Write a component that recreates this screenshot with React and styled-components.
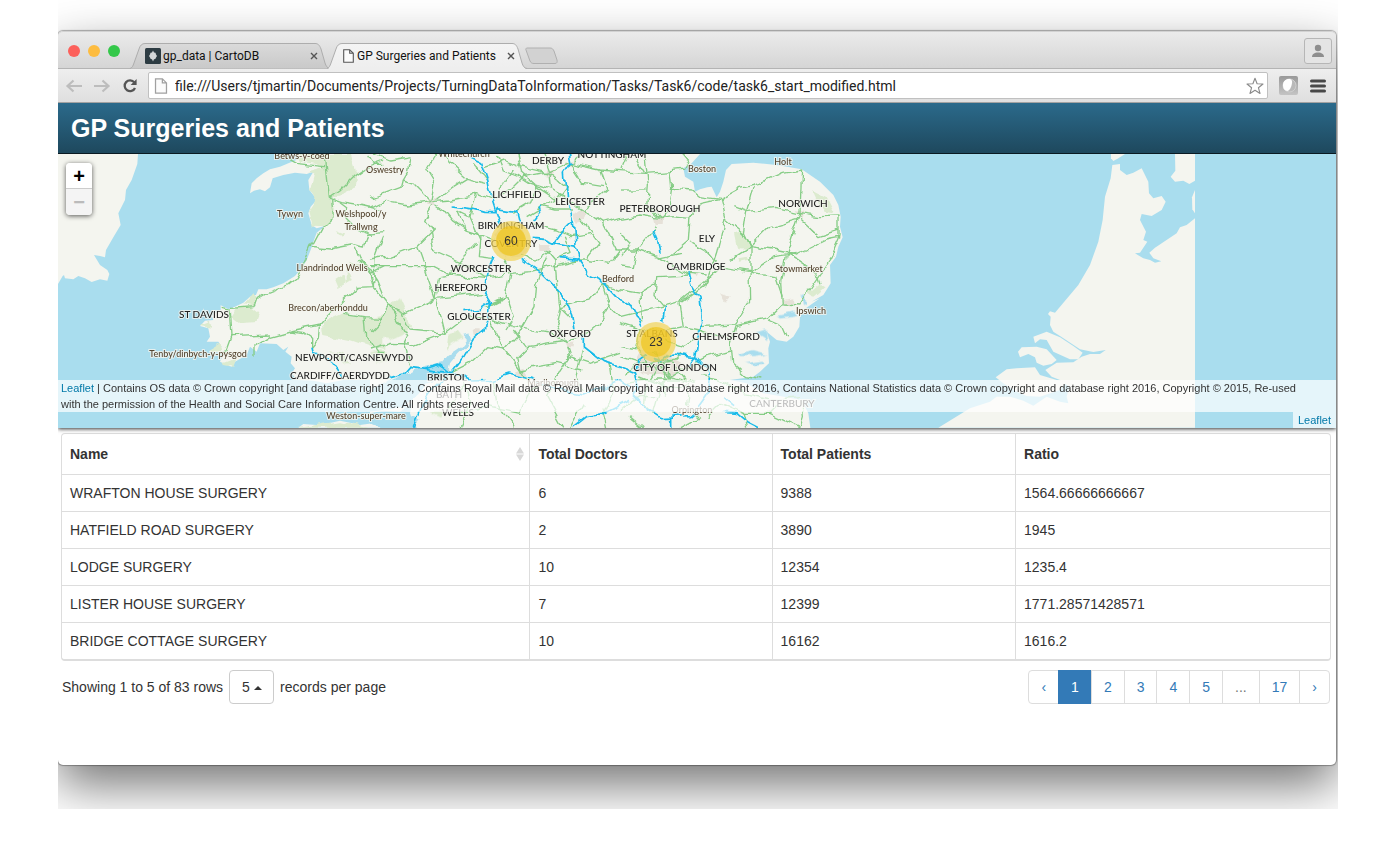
import React, { useState } from "react";
import styled, { createGlobalStyle } from "styled-components";

const GlobalStyle = createGlobalStyle`
  *, *::before, *::after { box-sizing: border-box; }
  body {
    margin: 0;
    background: #fff;
    color: #333;
    font: 14px/20px "Liberation Sans", Arial, sans-serif;
  }
  button, input, select { font: inherit; color: inherit; margin: 0; }
`;

const UI_FONT = `Roboto, "Liberation Sans", sans-serif`;

/* ---------- window frame ---------- */

const Stage = styled.div`
  margin: 0 54px 0 58px;
  padding: 31px 2px 44px 0;
  overflow: hidden;
`;

const Window = styled.div`
  background: #fff;
  border-radius: 5px;
  box-shadow: 0 0 1px 1px rgba(0, 0, 0, 0.3), 0 20px 50px rgba(0, 0, 0, 0.55);
`;

const TabStrip = styled.div`
  display: flex;
  align-items: flex-end;
  height: 38px;
  padding: 2px 4px 0 10px;
  border-top: 1px solid #d2d2d2;
  border-bottom: 1px solid #b4b4b4;
  border-radius: 5px 5px 0 0;
  background: linear-gradient(#ebebeb, #d5d5d5);
`;

const Lights = styled.div`
  display: flex;
  gap: 8px;
  align-self: center;
  margin-right: 10px;
`;

const Light = styled.span`
  width: 12px;
  height: 12px;
  border-radius: 50%;
  background: ${(p) => p.$color};
`;

const Tab = styled.div`
  position: relative;
  z-index: ${(p) => (p.$active ? 2 : 1)};
  display: flex;
  align-items: center;
  width: 200px;
  height: 26px;
  margin: 0 -3px -1px 0;
  padding: 0 10px 0 15px;
`;

const TabShape = styled.svg`
  position: absolute;
  inset: 0;
  z-index: -1;
`;

const TabButton = styled.button`
  flex: 1;
  display: flex;
  align-items: center;
  gap: 2px;
  padding: 0;
  border: 0;
  background: none;
  font: 12px/16px ${UI_FONT};
  color: #111;
  white-space: nowrap;
`;

const IconButton = styled.button`
  display: flex;
  align-items: center;
  justify-content: center;
  flex: none;
  width: ${(p) => p.$size || 20}px;
  height: ${(p) => p.$size || 20}px;
  padding: 0;
  border: 0;
  background: none;
`;

const NewTab = styled.button`
  align-self: flex-end;
  margin: 0 0 3px 0;
  padding: 0;
  border: 0;
  background: none;
  height: 18px;
`;

const UserButton = styled.button`
  display: flex;
  align-items: center;
  justify-content: center;
  align-self: center;
  margin-left: auto;
  width: 28px;
  height: 26px;
  padding: 0;
  border: 1px solid #b6b6b6;
  border-radius: 3px;
  background: #e4e4e4;
`;

const Toolbar = styled.div`
  display: flex;
  align-items: center;
  gap: 8px;
  height: 34px;
  padding: 0 8px 0 6px;
  border-bottom: 1px solid #a2a2a2;
  background: linear-gradient(#eeeeee, #dfdfdf);
`;

const Omnibox = styled.label`
  flex: 1;
  display: flex;
  align-items: center;
  gap: 7px;
  height: 27px;
  padding: 0 3px 0 5px;
  border: 1px solid #c0c0c0;
  border-radius: 2px;
  background: #fff;
`;

const Url = styled.input`
  flex: 1;
  min-width: 0;
  padding: 0;
  border: 0;
  outline: 0;
  background: none;
  font: 14px/20px ${UI_FONT};
  color: #222;
`;

/* ---------- page ---------- */

const Banner = styled.header`
  display: flex;
  align-items: center;
  height: 51px;
  padding: 0 13px;
  border-bottom: 1px solid #0a1a22;
  background: linear-gradient(#2b6a8b, #1e485d);
`;

const Title = styled.h1`
  margin: 0;
  font-size: 25px;
  line-height: 30px;
  font-weight: bold;
  color: #fff;
`;

const MapPane = styled.section`
  position: relative;
  height: 274px;
  overflow: hidden;
  background: #a9ddee;
`;

const MapShadow = styled.div`
  position: relative;
  box-shadow: 0 1px 4px rgba(0, 0, 0, 0.8);
  clip-path: inset(0 0 -8px 0);
`;

const MapDrawing = styled.svg`
  display: block;
`;

const City = styled.text`
  font: 500 ${(p) => (p.$town ? 9 : 10)}px Lato, sans-serif;
  fill: ${(p) => (p.$town ? "#54442f" : "#222")};
  stroke: rgba(244, 245, 239, 0.8);
  stroke-width: 2px;
  paint-order: stroke;
  text-anchor: middle;
`;

const Cluster = styled.button`
  position: absolute;
  left: ${(p) => p.$x}px;
  top: ${(p) => p.$y}px;
  width: 40px;
  height: 40px;
  padding: 5px;
  border: 0;
  border-radius: 50%;
  background: rgba(241, 211, 87, 0.7);
`;

const ClusterCore = styled.span`
  display: block;
  border-radius: 50%;
  background: rgba(240, 194, 12, 0.6);
  font-size: 12px;
  line-height: 30px;
`;

const ZoomControl = styled.div`
  position: absolute;
  left: 8px;
  top: 9px;
  border-radius: 4px;
  overflow: hidden;
  box-shadow: 0 1px 5px rgba(0, 0, 0, 0.65);
`;

const ZoomButton = styled.button`
  display: block;
  width: 26px;
  height: 26px;
  padding: 0;
  border: 0;
  border-bottom: ${(p) => (p.disabled ? "0" : "1px solid #ccc")};
  background: ${(p) => (p.disabled ? "#f4f4f4" : "#fff")};
  color: ${(p) => (p.disabled ? "#bbb" : "#000")};
  font: bold 20px/26px "Liberation Sans", sans-serif;
`;

const Credits = styled.div`
  position: absolute;
  inset: auto 0 0 0;
  display: flex;
  flex-direction: column;
  align-items: flex-end;
  font-size: 11px;
  line-height: 16px;
`;

const Credit = styled.div`
  padding: ${(p) => (p.$small ? "0 5px" : "0 20px 0 3px")};
  background: rgba(255, 255, 255, 0.7);
  a { color: #0078a8; text-decoration: none; }
`;

const TableArea = styled.main`
  padding: 5px 5px 61px 3px;
`;

const TableFrame = styled.div`
  border: 1px solid #ddd;
  border-bottom-width: 2px;
  border-radius: 4px;
  overflow: hidden;
`;

const Table = styled.table`
  width: 100%;
  table-layout: fixed;
  border-collapse: collapse;
`;

const HeadCell = styled.th`
  height: 40px;
  padding: 0 8px;
  border-bottom: 1px solid #ddd;
  text-align: left;
  font-weight: bold;
  & + & { border-left: 1px solid #ddd; }
`;

const HeadInner = styled.div`
  display: flex;
  align-items: center;
  justify-content: space-between;
  margin-right: -3px;
`;

const Cell = styled.td`
  height: 37px;
  padding: 8px;
  & + & { border-left: 1px solid #ddd; }
  tr + tr > & { border-top: 1px solid #ddd; }
`;

const TableFooter = styled.div`
  display: flex;
  justify-content: space-between;
  align-items: center;
  padding: 9px 1px 0;
`;

const Summary = styled.div`
  display: flex;
  align-items: center;
  gap: 6px;
`;

const PageSize = styled.span`
  position: relative;
  svg { position: absolute; right: 12px; top: 16px; pointer-events: none; }
`;

const SizeSelect = styled.select`
  appearance: none;
  display: block;
  width: 45px;
  height: 34px;
  padding: 0 12px;
  border: 1px solid #ccc;
  border-radius: 4px;
  background: #fff;
`;

const Pager = styled.nav`
  display: flex;
`;

const PageLink = styled.a`
  padding: 6px 12px;
  margin-left: -1px;
  border: 1px solid ${(p) => (p.$current ? "#337ab7" : "#ddd")};
  background: ${(p) => (p.$current ? "#337ab7" : "#fff")};
  color: ${(p) => (p.$current ? "#fff" : p.$muted ? "#777" : "#337ab7")};
  text-decoration: none;
  &:first-child { border-radius: 4px 0 0 4px; }
  &:last-child { border-radius: 0 4px 4px 0; }
`;

/* ---------- icons ---------- */

const CloseIcon = () => (
  <svg width="8" height="8" viewBox="0 0 8 8">
    <path d="M1 1 7 7M7 1 1 7" stroke="#555" strokeWidth="1.4" />
  </svg>
);

const PageIcon = ({ color = "#555", w = 13, h = 14 }) => (
  <svg width={w} height={h} viewBox="0 0 11 14">
    <path d="M.7.7h6l3.6 3.6v9H.7zM6.7.7v3.6h3.6" fill="#fbfbfb" stroke={color} strokeWidth="1.1" />
  </svg>
);

const CartoIcon = () => (
  <svg width="16" height="16" viewBox="0 0 16 16">
    <rect width="16" height="16" rx="1.5" fill="#2d3c43" />
    <path d="M8 2.500 9 4.500 10.500 4.800 11 6.500 12 8 11 9.500 10.300 11 9 11.200 8 13.600 7 11.200 5.700 11 5 9.500 4 8 5 6.500 5.500 4.800 7 4.500z" fill="#d4d8da" />
  </svg>
);

const ArrowIcon = ({ flip }) => (
  <svg width="18" height="14" viewBox="0 0 18 14">
    <path
      d={flip ? "M1 7h14M9.500 1.500 15.500 7 9.500 12.500" : "M17 7H3M8.500 1.500 2.500 7 8.500 12.500"}
      fill="none" stroke="#bdbdbd" strokeWidth="2.2"
    />
  </svg>
);

const ReloadIcon = () => (
  <svg width="16" height="16" viewBox="0 0 16 16">
    <path d="M12.300 4.400A5.400 5.400 0 1 0 13 10" fill="none" stroke="#555" strokeWidth="2.3" />
    <path d="M14.600 1v6H8.600z" fill="#555" />
  </svg>
);

const StarIcon = () => (
  <svg width="18" height="18" viewBox="0 0 18 18">
    <path
      d="M9 1.200 11.100 6.700 17 7 12.400 10.700 14 16.500 9 13.200 4 16.500 5.600 10.700 1 7 6.900 6.700z"
      fill="#fff" stroke="#8a8a8a" strokeWidth="1.1" strokeLinejoin="round"
    />
  </svg>
);

const ExtensionIcon = () => (
  <svg width="19" height="19" viewBox="0 0 19 19">
    <defs>
      <linearGradient id="ext" x2="0" y2="1">
        <stop offset="0" stopColor="#999" />
        <stop offset="1" stopColor="#c4c4c4" />
      </linearGradient>
    </defs>
    <rect width="19" height="19" rx="2" fill="url(#ext)" />
    <circle cx="10.500" cy="9.500" r="6.500" fill="#b9b9b9" stroke="#cfcfcf" />
    <path d="M4 9C4 5 7 2.500 11.500 3.200 14 4 13 8 12 11 11 13.500 9.500 15 8 15 5 14.500 4 12 4 9z" fill="#fff" />
  </svg>
);

const MenuIcon = () => (
  <svg width="16" height="14" viewBox="0 0 16 14">
    <path d="M1.500 2h13M1.500 7h13M1.500 12h13" stroke="#484848" strokeWidth="3" strokeLinecap="round" />
  </svg>
);

const UserIcon = () => (
  <svg width="14" height="14" viewBox="0 0 14 14" fill="#8e8e8e">
    <circle cx="7" cy="4" r="3.200" />
    <path d="M1 13c0-3 2.500-4.500 6-4.500S13 10 13 13z" />
  </svg>
);

const SortIcon = () => (
  <svg width="8" height="14" viewBox="0 0 8 14" fill="#d8d8d8">
    <path d="M4 0 8 6.500H0zM0 7.500h8L4 14z" />
  </svg>
);

/* ---------- map data, in thirds of a pixel per sheet ---------- */

const SHEETS = [
  {
    x: 50,
    land: [
      "24,12 264,12 262,42 245,90 228,120 225,150 205,190 212,225 190,262 168,300 165,322 150,318 132,315 150,345 172,360 178,372 172,392 150,388 125,396 105,385 85,378 70,388 45,385 42,375 60,362 38,378 24,402",
      "740,12 745,28 715,40 690,50 660,58 640,70 620,85 605,100 600,130 612,122 630,118 645,124 660,112 668,85 700,75 735,68 770,72 790,65 775,90 778,120 790,135 800,150 782,170 775,190 785,225 800,235 825,228 800,248 792,270 785,292 770,330 755,355 735,378 700,400 670,412 650,418 625,418 618,435 600,440 580,458 555,470 535,478 512,466 512,480 500,485 485,497 490,510 465,512 450,528 475,535 480,560 470,575 505,575 515,590 490,597 480,602 520,612 510,635 545,650 555,635 590,615 600,590 620,605 630,580 680,582 700,600 715,590 706,605 725,620 722,640 735,655 725,670 740,690 790,692 830,700 880,690 1000,690 1000,12",
      "745,833 760,822 810,826 870,812 900,818 930,825 1000,815 1000,833",
    ],
    green: [
      "770,65 825,50 790,40 750,35 740,12 905,12 920,60 915,110 870,140 838,142 800,155 778,120 790,70",
      "775,190 800,150 838,142 855,170 850,200 825,232 785,230",
      "540,500 560,472 600,468 628,490 620,510 560,515",
      "580,463 612,428 622,445 612,470",
      "815,520 880,490 925,498 945,500 1000,505 1000,600 960,590 900,570 820,555",
      "450,525 480,512 485,530",
      "475,600 515,575 520,605 490,610", "520,640 560,625 550,650 525,645",
      "840,600 880,610 900,640 880,640", "745,833 870,814 960,833",
      "860,240 885,250 880,262", "850,390 880,370 890,400 860,415", "900,335 935,345 915,360", "890,350 905,390 890,400",
    ],
    roads: [
      "825,12 830,60 838,142 875,155 935,165 1000,180", "838,142 870,120 910,80 960,45 1000,30",
      "845,145 850,200 815,235 785,292 765,340 735,385 710,405 645,430 620,445 612,470 540,475",
      "785,292 840,297 900,285 940,294 950,250 1000,245", "915,295 930,330 958,360 970,410 920,412 880,450 830,500 808,525 720,543 660,560 612,590 612,620",
      "515,475 538,480 543,560 525,610", "543,560 660,555", "720,543 765,548 788,565 788,592", "808,525 805,570 788,592",
      "970,410 975,330 1000,260", "880,490 945,500 1000,502", "945,500 950,560 985,610 1000,610", "950,12 970,40 1000,40",
      "690,12 740,40 825,50", "870,155 890,170 885,210 905,230 965,250", "925,330 960,370 1000,350", "970,410 1000,440",
    ],
    motorways: ["785,590 790,608 815,615 850,640 880,685"],
  },
  {
    x: 370,
    land: ["0,0 800,0 800,840 145,840 130,820 120,790 125,760 90,785 40,782 0,790"],
    sea: [
      "0,720 60,695 110,672 140,656 190,645 215,640 235,615 265,595 285,570 275,558 295,553 300,572 280,595 262,612 240,640 232,672 190,695 160,702 140,735 100,770 40,780 0,785",
      "0,800 35,797 75,790 130,800 150,810 128,833 40,833 0,815",
    ],
    green: [
      "0,500 40,490 90,445 110,490 130,530 100,550 60,570 0,560", "235,555 260,545 275,565 240,585 230,600",
      "0,610 30,600 60,625 20,635", "180,785 230,780 210,800",
    ],
    urban: [
      "370,250 400,225 450,235 480,280 450,320 400,325", "610,190 630,175 650,190 645,210 620,215", "435,660 460,650 470,680 440,680",
      "585,575 610,575 608,595 590,595", "205,650 235,645 240,668 210,670", "175,145 200,145 198,168 175,168", "530,55 555,60 545,80 530,75",
      "310,535 335,535 335,555 315,560", "510,285 545,285 540,300 515,300", "585,35 610,30 605,55", "700,380 720,390 710,410",
    ],
    roads: [
      "15,12 60,30 120,20 112,70 100,90 130,100 185,155 110,165 70,158 50,150 0,175", "100,90 95,110 0,145",
      "190,155 240,150 300,140 320,130 370,150", "200,165 222,180 250,215 285,240 330,255 370,270", "190,165 165,205 190,240 140,290 60,320 0,330",
      "230,12 240,40 290,85 345,100", "290,85 250,110 200,150", "370,150 420,120 460,80 540,65 600,35", "340,50 400,30 450,50 540,70 590,110",
      "440,12 455,70 500,110 480,160 430,190", "590,110 560,150 520,170 470,200", "540,65 520,12", "600,40 690,60 750,65", "600,45 640,12",
      "690,60 710,120 640,180 700,220 750,205", "630,205 690,280 650,330 625,330", "610,180 560,180 520,170", "380,12 400,60 440,75",
      "0,355 20,385 55,470 100,490 195,445 205,380 240,375 345,385 420,370 480,365 540,350 620,330", "195,445 250,440 345,430", "55,470 25,520 0,545",
      "200,450 215,510 225,550 290,500 360,510 430,530 540,550 590,575", "360,520 405,600 450,660 475,700",
      "405,600 350,590 300,640 240,670", "405,600 450,550 495,470 500,400 530,320", "430,540 470,590 590,570 640,560",
      "590,590 600,620 560,680 530,740 580,833", "555,330 560,400 570,470 600,500", "570,470 660,450 700,400 750,420", "700,400 720,470 690,520 640,560", "720,470 750,500",
      "330,255 325,320 370,325", "330,270 300,200 260,180", "420,370 405,440 350,470", "530,300 555,330 600,310 580,260", "240,375 190,350 130,350 0,350",
      "280,690 300,760 270,833", "250,790 350,770 450,790 480,720 560,690", "120,590 200,560 220,540", "60,470 110,560 100,580 120,650", "0,600 60,580 120,582",
      "540,70 545,120 590,150", "480,220 560,240 600,260 660,250", "400,330 420,370", "450,310 500,330 540,300", "345,385 280,340 190,300 180,240",
      "640,180 560,130", "700,220 740,300 750,300", "650,330 720,340 750,300", "600,40 640,100 700,110", "320,280 270,330 240,375", "358,460 410,440 430,500 405,540",
      "450,660 560,640 640,660", "640,600 620,680 640,720", "720,640 730,720 700,790", "640,760 600,833", "370,690 380,760 430,833", "700,790 710,833", "390,115 430,60", "260,180 285,240",
      "350,90 310,40", "500,110 560,150", "185,155 195,100 170,60 200,12",
      "470,590 440,620 450,660", "600,620 660,640 750,610", "590,575 560,520 570,470", "100,490 120,540 225,550", "140,290 195,445", "300,200 320,130", "440,75 480,100 545,120", "230,790 260,740 285,700",
    ],
    motorways: [
      "300,20 332,35 350,90 357,125 375,180 392,225", "245,168 300,175 345,187 375,188 385,176 440,185 450,225", "598,12 603,40 583,70 590,150 610,210 615,290 625,330 655,370 690,385 740,440 785,468",
      "488,210 518,170", "610,210 575,245 550,280 618,295", "550,280 520,268 485,265", "575,323 625,328", "455,325 510,365 550,405 580,440 605,495 612,540", "640,560 640,588 700,635 750,650",
      "375,315 355,370 343,430 358,455 355,500 345,540 310,570 280,620 245,665 180,730 150,775 130,833", "280,482 330,475 358,455", "50,690 100,675 120,652 165,658 235,668",
      "165,658 205,645 235,665 300,690 370,688 420,672 480,688 560,720 640,735 750,690", "608,833 650,800 700,790 780,750",
    ],
  },
  {
    x: 620,
    land: ["0,0 240,12 215,40 190,55 195,80 220,95 225,125 240,118 262,112 275,110 290,142 300,125 310,95 318,60 335,42 400,38 470,45 545,58 600,95 640,135 655,165 662,200 660,230 668,262 655,290 648,320 630,345 632,400 610,435 575,455 600,445 550,480 540,500 538,530 520,560 500,575 470,570 440,545 450,575 445,595 447,640 420,665 400,680 330,690 380,700 430,730 500,742 545,750 565,790 572,840 0,840"],
    sea: ["470,495 520,485 530,495 480,503", "545,430 558,440 562,475 552,470", "355,612 400,600 445,612 400,618 360,618", "370,640 430,632 440,640 400,645", "405,545 440,535 445,570 430,560"],
    green: ["345,250 370,240 385,280 388,300 355,298", "580,120 620,140 645,190 610,185", "355,325 380,320 385,330 360,335", "565,430 600,400 615,410 580,440"],
    urban: ["60,600 110,600 190,640 160,680 70,670 40,640", "105,205 130,200 128,228 110,228", "0,20 40,15 20,30", "490,450 520,445 520,460 495,465", "220,370 235,375 230,385", "300,430 330,440 315,455", "530,180 550,185 545,205"],
    roads: [
      "0,65 75,70 150,65 190,60 205,30 190,12", "75,12 85,110 80,165 120,205", "150,65 155,115 215,120 240,140 300,148 245,160 210,200 205,270 140,325", "155,115 145,180 120,210",
      "300,148 360,115 420,100 490,70 545,60 540,190 500,310 485,400 490,460", "300,148 315,205 370,250 390,290 390,360 392,450 345,525 240,530", "315,205 290,310 270,370 250,410 180,460",
      "340,170 380,185 470,175 535,190 600,200 660,198 660,260", "535,205 450,230 390,290", "390,290 460,300 530,315 620,270 660,262", "390,290 335,325", "210,275 255,300 290,340",
      "390,365 300,350 270,380 180,455 0,500", "388,370 460,320 530,310", "390,370 470,380 490,440", "490,462 540,465 570,420 630,330 660,262", "490,460 440,510 345,530 330,580", "440,510 485,530 500,565",
      "0,205 60,195 120,205 160,200 205,205 240,160", "0,300 50,300 120,325 210,375 110,380 105,440 130,470", "50,300 110,230", "0,420 60,430 110,400", "60,430 65,520",
      "180,460 190,530 240,540 330,570 335,640 380,680 430,690", "190,530 130,540 60,540 50,600 100,650 150,680 230,700", "150,680 120,720 100,790", "0,60 20,12", "0,120 80,120", "0,250 30,280 0,320",
      "100,600 130,640 150,680 200,650 260,620 330,600", "60,640 110,630 160,640 200,690", "90,690 120,640 110,600", "20,700 90,690 180,690", "80,650 150,640 180,610", "0,590 50,600", "0,620 60,640",
      "240,680 300,690 370,730 450,750 540,740", "0,780 60,740 110,740", "260,800 300,760 370,790 450,790 540,833", "30,800 70,833", "180,833 240,800", "545,750 550,800 540,833", "370,790 380,833", "450,790 480,760",
      "390,290 370,250 380,185 400,110", "500,310 590,370 600,400", "540,205 600,260 660,240", "0,345 40,350 50,300", "210,370 260,375", "110,325 180,310", "40,12 75,70", "210,690 200,760 235,800",
      "120,640 140,690 130,740", "60,680 110,700 170,720 210,700", "0,520 60,540", "40,640 20,680", "80,700 70,760 100,790", "130,570 190,590 230,570",
    ],
    motorways: [
      "33,468 45,490 65,530", "100,237 113,270 120,315", "133,470 128,515", "207,370 215,400 240,440 248,515 235,560 228,615 205,645", "100,625 130,635 160,612 228,620 260,655 268,690 260,735 235,770",
      "50,665 50,635 80,612", "0,650 50,670 55,700 40,735 75,770 120,800 210,797 240,770", "310,740 345,770", "155,800 155,833", "310,787 350,790 380,815 415,833", "0,690 30,710",
    ],
  },
  {
    x: 860,
    land: [
      "753,12 795,12 775,25 760,33 753,25",
      "757,45 780,42 780,60 800,75 820,68 845,55 865,95 867,130 880,145 905,138 917,155 905,180 875,198 845,192 840,210 858,245 850,270 862,275 840,308 825,310 850,325 870,330 885,338 904,334 880,325 868,308 885,293 950,250 960,232 980,225 1005,205 1005,833 235,833 330,775 390,755 410,740 450,740 490,752 520,767 560,740 600,755 625,760 620,740 628,710 600,690 575,680 556,660 590,638 640,637 665,620 690,612 720,612 737,600 700,606 660,598 600,558 580,545 570,525 572,500 564,492 570,484 585,488 655,405 690,345 715,275 728,210 735,140 752,85",
      "520,560 560,545 600,562 640,588 668,608 655,628 630,628 580,605 560,570 540,568 525,580", "474,605 485,592 530,590 560,598 590,630 575,642 550,647 530,638 525,622 505,612 480,622",
      "407,682 440,658 470,655 525,652 540,675 590,690 622,692 600,720 540,740 500,738 470,725 430,700", "945,12 1005,12 1005,92 988,102 970,92 945,95 932,80 946,62", "1005,120 996,142 997,178 1005,190",
    ],
  },
];

/* painted bottom to top; rough layers get an irregular edge */
const LAYERS = [
  { key: "land", closed: true, style: { fill: "#f4f5ef" } },
  { key: "green", closed: true, rough: true, style: { fill: "#dcebcf" } },
  { key: "urban", closed: true, rough: true, style: { fill: "#e6e1d8" } },
  { key: "sea", closed: true, rough: true, style: { fill: "#a9ddee" } },
  { key: "roads", rough: true, style: { fill: "none", stroke: "#86cd86", strokeWidth: 4 } },
  { key: "motorways", rough: true, style: { fill: "none", stroke: "#18bbea", strokeWidth: 5 } },
];

const TOWNS = [
  ["Betws-y-coed", 302, 159, 1], ["Oswestry", 385, 173, 1], ["Whitechurch", 464, 157, 1], ["DERBY", 548, 164], ["NOTTINGHAM", 612, 158],
  ["Boston", 702, 172, 1], ["Holt", 783, 165, 1], ["LICHFIELD", 517, 198], ["LEICESTER", 580, 205], ["PETERBOROUGH", 660, 212], ["NORWICH", 803, 207],
  ["Tywyn", 290, 217, 1], ["Welshpool/y", 361, 217, 1], ["Trallwng", 361, 230, 1], ["BIRMINGHAM", 511, 229], ["COVENTRY", 511, 247], ["ELY", 707, 242],
  ["CAMBRIDGE", 696, 270], ["Llandrindod Wells", 332, 271, 1], ["WORCESTER", 481, 272], ["Bedford", 618, 282, 1], ["Stowmarket", 799, 272, 1], ["HEREFORD", 461, 291],
  ["ST DAVIDS", 204, 318], ["Brecon/aberhonddu", 328, 311, 1], ["Ipswich", 811, 314, 1], ["GLOUCESTER", 479, 320], ["OXFORD", 570, 337], ["ST ALBANS", 652, 337], ["CHELMSFORD", 726, 340],
  ["Tenby/dinbych-y-pysgod", 198, 357, 1], ["NEWPORT/CASNEWYDD", 354, 361], ["CARDIFF/CAERDYDD", 340, 379], ["BRISTOL", 447, 381], ["CITY OF LONDON", 675, 371],
  ["Marlborough", 553, 386, 1], ["BATH", 449, 398], ["WELLS", 458, 416], ["Weston-super-mare", 366, 419, 1], ["Orpington", 692, 413, 1], ["CANTERBURY", 782, 407],
];

const line = (pts) => "M" + pts.split(" ").join("L");

const UkMap = () => (
  <MapDrawing width="1278" height="275" viewBox="58 154 1278 275" role="img" aria-label="Map of England and Wales">
    <filter id="rough" filterUnits="userSpaceOnUse" x="58" y="154" width="1137" height="275">
      <feTurbulence type="fractalNoise" baseFrequency="0.07" numOctaves="2" seed="4" />
      <feDisplacementMap in="SourceGraphic" scale="9" xChannelSelector="R" yChannelSelector="G" />
    </filter>
    {LAYERS.map(({ key, closed, rough, style }) => (
      <g key={key} filter={rough ? "url(#rough)" : undefined} strokeLinejoin="round" {...style}>
        {SHEETS.map((s) => (
          <g key={s.x} transform={`translate(${s.x} 150) scale(.33333)`}>
            {(s[key] || []).map((pts) => <path key={pts} d={line(pts) + (closed ? "Z" : "")} />)}
          </g>
        ))}
      </g>
    ))}
    {TOWNS.map(([name, x, y, town]) => <City key={name} x={x} y={y} $town={town}>{name}</City>)}
  </MapDrawing>
);

/* ---------- table data ---------- */

const COLUMNS = [["Name", "36.9%"], ["Total Doctors", "19.1%"], ["Total Patients", "19.2%"], ["Ratio", "auto"]];

const ROWS = [
  ["WRAFTON HOUSE SURGERY", "6", "9388", "1564.66666666667"],
  ["HATFIELD ROAD SURGERY", "2", "3890", "1945"],
  ["LODGE SURGERY", "10", "12354", "1235.4"],
  ["LISTER HOUSE SURGERY", "7", "12399", "1771.28571428571"],
  ["BRIDGE COTTAGE SURGERY", "10", "16162", "1616.2"],
];

const PAGES = ["‹", "1", "2", "3", "4", "5", "...", "17", "›"];

const BrowserTab = ({ title, icon, active }) => (
  <Tab $active={active}>
    <TabShape width="200" height="26" viewBox="0 0 200 26">
      <defs>
        <linearGradient id={active ? "tabOn" : "tabOff"} x2="0" y2="1">
          <stop offset="0" stopColor={active ? "#f4f4f4" : "#dadada"} />
          <stop offset="1" stopColor={active ? "#eeeeee" : "#c9c9c9"} />
        </linearGradient>
      </defs>
      <path
        d="M0 25.500C2 25 3 23 4 20L9 6C10 2.500 12 .5 15 .5H185C188 .5 189.500 2 191 6L195 20C196 23 197 25 200 25.500"
        fill={`url(#${active ? "tabOn" : "tabOff"})`} stroke="#adadad"
      />
      {active && <path d="M2 25.500H198" stroke="#eee" />}
    </TabShape>
    <TabButton role="tab" aria-selected={!!active}>{icon}{title}</TabButton>
    <IconButton $size={12} aria-label={`Close ${title}`}><CloseIcon /></IconButton>
  </Tab>
);

export default function App() {
  const [url, setUrl] = useState("file:///Users/tjmartin/Documents/Projects/TurningDataToInformation/Tasks/Task6/code/task6_start_modified.html");
  const [size, setSize] = useState("5");

  return (
    <>
      <GlobalStyle />
      <Stage>
        <Window>
          <TabStrip>
            <Lights>
              <Light $color="#fc605b" />
              <Light $color="#fdbc40" />
              <Light $color="#34c84a" />
            </Lights>
            <BrowserTab title="gp_data | CartoDB" icon={<CartoIcon />} />
            <BrowserTab title="GP Surgeries and Patients" icon={<PageIcon />} active />
            <NewTab aria-label="New tab">
              <svg width="34" height="18" viewBox="0 0 34 18">
                <path d="M3 1H26C28 1 29 2 30 4L33 13C33.500 15 33 16.500 31 16.500H10C8 16.500 7 16 6 14L2 3C1.500 2 2 1 3 1z" fill="#d2d2d2" stroke="#b0b0b0" />
              </svg>
            </NewTab>
            <UserButton aria-label="User"><UserIcon /></UserButton>
          </TabStrip>
          <Toolbar>
            <IconButton aria-label="Back"><ArrowIcon /></IconButton>
            <IconButton aria-label="Forward"><ArrowIcon flip /></IconButton>
            <IconButton aria-label="Reload"><ReloadIcon /></IconButton>
            <Omnibox>
              <PageIcon color="#a0a0a0" w={14} h={16} />
              <Url aria-label="Address" value={url} onChange={(e) => setUrl(e.target.value)} />
              <StarIcon />
            </Omnibox>
            <IconButton $size={24} aria-label="Extension"><ExtensionIcon /></IconButton>
            <IconButton aria-label="Menu"><MenuIcon /></IconButton>
          </Toolbar>

          <Banner><Title>GP Surgeries and Patients</Title></Banner>

          <MapShadow>
            <MapPane>
              <UkMap />
              <Cluster $x={433} $y={67}><ClusterCore>60</ClusterCore></Cluster>
              <Cluster $x={578} $y={168}><ClusterCore>23</ClusterCore></Cluster>
              <ZoomControl>
                <ZoomButton aria-label="Zoom in">+</ZoomButton>
                <ZoomButton aria-label="Zoom out" disabled>−</ZoomButton>
              </ZoomControl>
              <Credits>
                <Credit>
                  <a href="#leaflet">Leaflet</a> | Contains OS data © Crown copyright [and database right] 2016, Contains Royal Mail data © Royal Mail copyright and Database right 2016, Contains National Statistics data © Crown copyright and database right 2016, Copyright © 2015, Re-used with the permission of the Health and Social Care Information Centre. All rights reserved
                </Credit>
                <Credit $small><a href="#leaflet">Leaflet</a></Credit>
              </Credits>
            </MapPane>
          </MapShadow>

          <TableArea>
            <TableFrame>
              <Table>
                <colgroup>
                  {COLUMNS.map(([name, width]) => <col key={name} width={width} />)}
                </colgroup>
                <thead>
                  <tr>
                    {COLUMNS.map(([name], i) => (
                      <HeadCell key={name} scope="col">
                        <HeadInner>{name}{i === 0 && <SortIcon />}</HeadInner>
                      </HeadCell>
                    ))}
                  </tr>
                </thead>
                <tbody>
                  {ROWS.map((row) => (
                    <tr key={row[0]}>{row.map((v, i) => <Cell key={i}>{v}</Cell>)}</tr>
                  ))}
                </tbody>
              </Table>
            </TableFrame>
            <TableFooter>
              <Summary>
                <span>Showing 1 to 5 of 83 rows</span>
                <PageSize>
                  <SizeSelect id="page-size" value={size} onChange={(e) => setSize(e.target.value)}>
                    <option>5</option>
                    <option>10</option>
                    <option>25</option>
                  </SizeSelect>
                  <svg width="8" height="4" viewBox="0 0 8 4"><path d="M4 0 8 4H0z" fill="#333" /></svg>
                </PageSize>
                <label htmlFor="page-size">records per page</label>
              </Summary>
              <Pager aria-label="Pages">
                {PAGES.map((p) => (
                  <PageLink key={p} href="#page" $current={p === "1"} $muted={p === "..."}>{p}</PageLink>
                ))}
              </Pager>
            </TableFooter>
          </TableArea>
        </Window>
      </Stage>
    </>
  );
}
